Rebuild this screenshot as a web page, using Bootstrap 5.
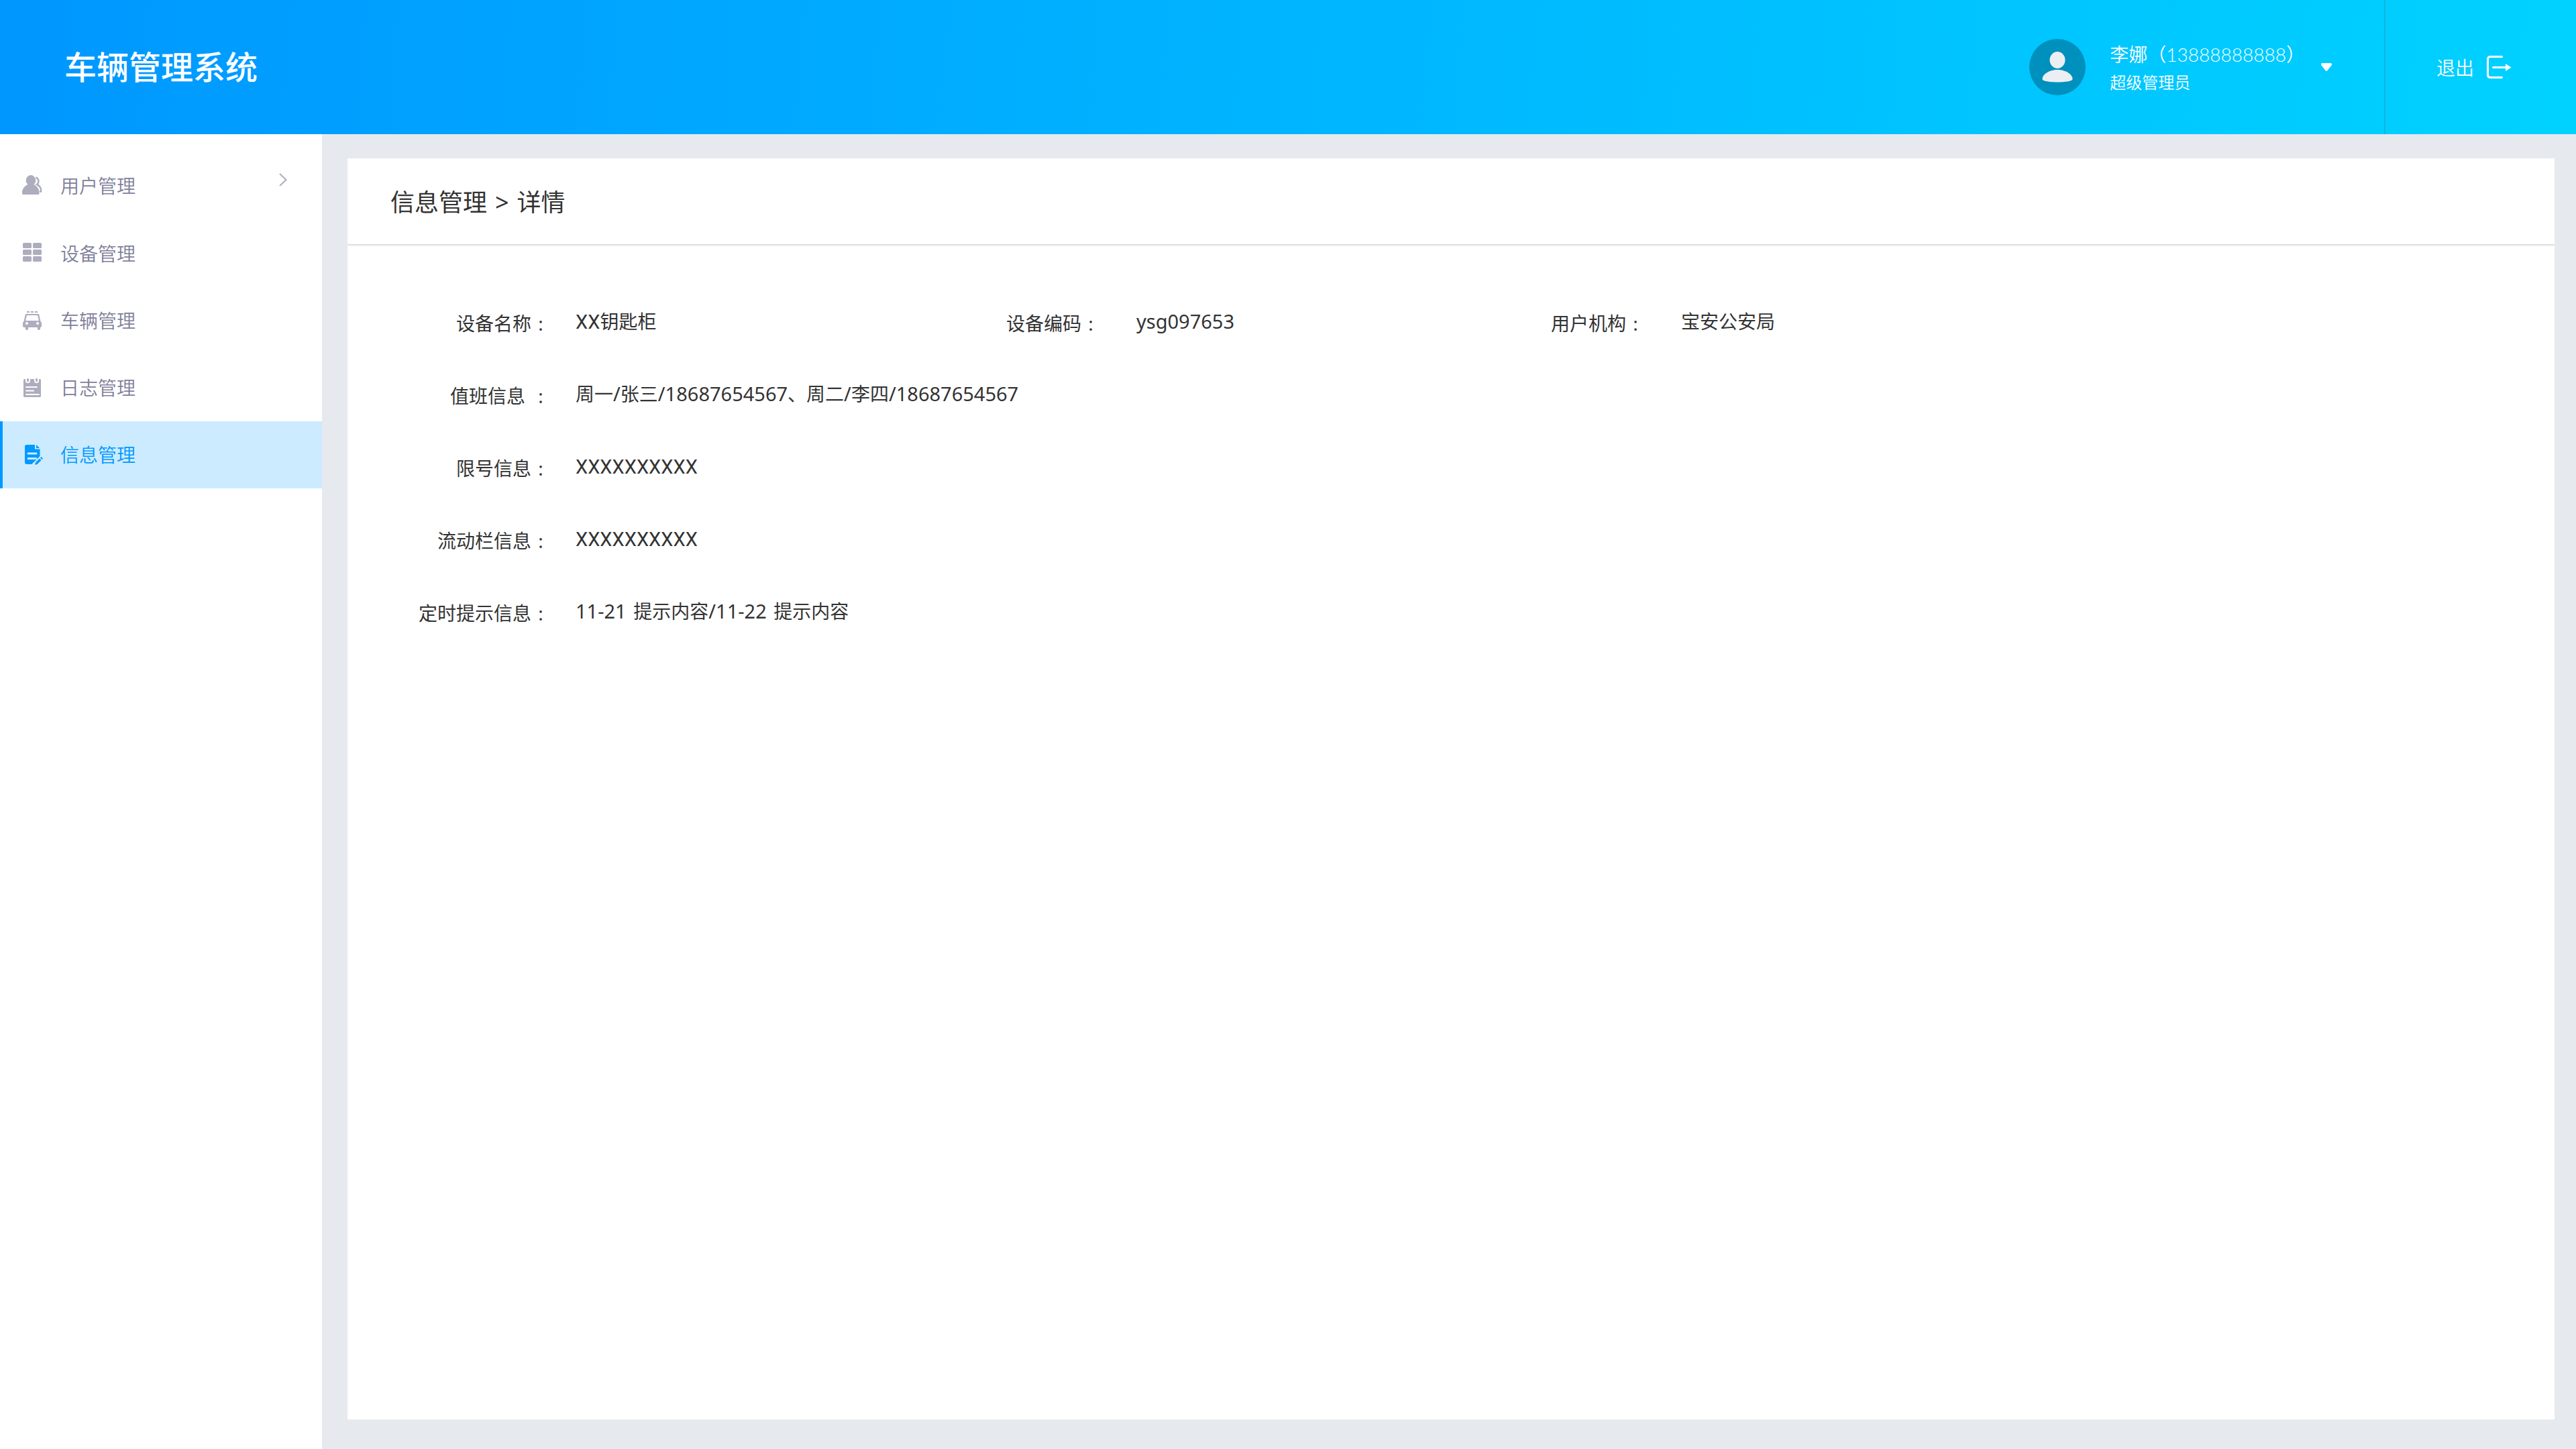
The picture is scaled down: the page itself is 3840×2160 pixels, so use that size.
<!DOCTYPE html>
<html lang="zh-CN">
<head>
<meta charset="utf-8">
<meta name="viewport" content="width=device-width, initial-scale=1">
<title>车辆管理系统</title>
<link href="https://cdn.jsdelivr.net/npm/bootstrap@5.3.0/dist/css/bootstrap.min.css" rel="stylesheet">
<style>
  body { font-family: "Noto Sans", "Noto Sans CJK SC", sans-serif; font-size: 28px; line-height: 40px; background: #e6e9ee; color: #333; }
  a { color: inherit; text-decoration: none; }
  .topbar { height: 200px; background: linear-gradient(95deg, #0097ff, #00d2ff); color: #fff; }
  .brand-title { padding: 0 0 6px 96px; font: 500 48px/72px "Noto Sans CJK SC", sans-serif; margin: 0; }
  .user-btn { color: #fff; padding: 0 78px 0 0; gap: 36px; font-family: Lato, "Noto Sans CJK SC", sans-serif; font-size: 28px; font-weight: 350; }
  .user-btn .who { padding-top: 2px; margin-right: -12px; }
  .user-btn .role { font-size: 24px; line-height: 40px; }
  .user-btn .name { line-height: 44px; }
  .exit-link { width: 286px; border-left: 2px solid #13b3e0; padding-left: 76px; gap: 18px; font-weight: 350; font-family: "Noto Sans CJK SC", sans-serif; }
  .side { width: 480px; background: #fff; padding-top: 28px; }
  .side .nav-link { height: 100px; padding: 0 52px 2px 28px; border-left: 4px solid transparent; gap: 26px; color: #80809a; font-family: "Noto Sans CJK SC", sans-serif; font-weight: 350; }
  .side .nav-link:first-child { padding-bottom: 4px; }
  .side .nav-link svg { fill: #adadbe; }
  .side .nav-link.active { color: #0099ff; background: #ccebff; border-left-color: #0099ff; }
  .side .nav-link.active svg { fill: #0099ff; }
  .content-area { padding: 36px 32px 44px 38px; }
  .crumbs { height: 130px; padding: 4px 0 0 64px; font-size: 36px; line-height: 52px; border-bottom: 2px solid #ddd; margin: 0; --bs-breadcrumb-divider: ">"; --bs-breadcrumb-divider-color: #333; --bs-breadcrumb-item-padding-x: 12px; --bs-breadcrumb-item-active-color: #333; }
  .fields { display: grid; grid-template-columns: 302px 170fr 140px 168fr 140px 339fr; row-gap: 65px; padding-top: 93px; margin: 0; }
  .fields dt { font-weight: 400; text-align: right; padding-top: 3px; white-space: nowrap; }
  .fields dt::after { content: ":"; display: inline-block; width: 28px; text-align: center; }
  .fields dt.spaced::after { margin-left: 9px; }
  .fields dd { margin: 0; padding-left: 38px; }
  .fields dd.far { padding-left: 54px; }
  .fields dd.wide { grid-column: span 5; }
  .num { font-size: 29px; }
  .day { padding-right: 3px; }
  .xs { font-family: Roboto, sans-serif; font-size: 29px; }
</style>
<script src="https://cdn.jsdelivr.net/npm/bootstrap@5.3.0/dist/js/bootstrap.bundle.min.js"></script>
</head>
<body class="d-flex flex-column min-vh-100">
<header class="topbar d-flex align-items-center">
  <h1 class="brand-title me-auto">车辆管理系统</h1>
  <button type="button" class="user-btn btn border-0 rounded-0 d-flex align-items-center text-start">
    <svg width="84" height="84" viewBox="0 0 84 84" aria-hidden="true"><circle cx="42" cy="42" r="42" fill="#0090bd"/><ellipse cx="42" cy="31.500" rx="11.500" ry="12.500" fill="#ebeff3"/><path d="M19.500 60C19.500 52 31 46 42 46s22.500 6 22.500 14c0 6-45 6-45 0z" fill="#ebeff3"/></svg>
    <span class="who d-flex flex-column"><span class="name">李娜（13888888888）</span><span class="role">超级管理员</span></span>
    <svg width="16" height="12" viewBox="0 0 16 12" aria-hidden="true"><path d="M1.500 0h13q2.500 1 1 3.500L9.500 11q-1.500 2-3 0L.500 3.500Q-1 1 1.500 0z" fill="#fff"/></svg>
  </button>
  <a href="#" class="exit-link h-100 d-flex align-items-center">退出
    <svg width="38" height="36" viewBox="0 0 38 36" fill="none" stroke="#fff" stroke-width="3" aria-hidden="true"><path d="M23.500 2.500H6.500Q2.500 2.500 2.500 6.500v23q0 4 4 4h17M10.500 18.500h20" stroke-linecap="round"/><path d="M29 13l8.500 5.500-8.500 5.500z" fill="#fff" stroke="none"/></svg>
  </a>
</header>
<div class="d-flex flex-grow-1">
  <nav class="side nav flex-column flex-nowrap flex-shrink-0">
    <a class="nav-link d-flex align-items-center" href="#">
      <svg width="32" height="32" viewBox="0 0 32 32" aria-hidden="true"><path d="M14 1a8 8 0 0 1 4.500 14C23 17 26.500 21.500 26.500 27v1.500Q26.500 30 25 30H2.500Q1 30 1 28.500V27C1 21.500 5 17 9.500 15A8 8 0 0 1 14 1z"/><path d="M21.500 4.500c5 2 5 8 1.500 10.500 4 1.500 7 6 6 10.500h-2" fill="none" stroke="#adadbe" stroke-width="2.500"/></svg>
      用户管理
      <svg class="ms-auto mb-3" width="12" height="20" viewBox="0 0 12 20" aria-hidden="true"><path d="M1 1l9.500 9L1 19" fill="none" stroke="#adadbe" stroke-width="2"/></svg>
    </a>
    <a class="nav-link d-flex align-items-center" href="#">
      <svg width="32" height="32" viewBox="0 0 32 32" aria-hidden="true"><rect x="2" y="1" width="13" height="8" rx="1.500"/><rect x="17" y="1" width="13" height="8" rx="1.500"/><rect x="2" y="11" width="13" height="8" rx="1.500"/><rect x="17" y="11" width="13" height="8" rx="1.500"/><rect x="2" y="21" width="13" height="8" rx="1.500"/><rect x="17" y="21" width="13" height="8" rx="1.500"/></svg>
      设备管理
    </a>
    <a class="nav-link d-flex align-items-center" href="#">
      <svg width="32" height="32" viewBox="0 0 32 32" aria-hidden="true"><path d="M8 3h4v2H8zM14 3h4v2h-4zM20 3h4v2h-4z"/><path fill-rule="evenodd" d="M6 7h20l2.500 11L30 20v5q0 2-2 2v3q-2 2-4 0v-3H10v3q-2 2-4 0v-3q-4 0-4-2v-5l1.500-2zM8 9L6 17h20L24 9zM8 19a2 2 0 1 0 0 4 2 2 0 0 0 0-4zM24 19a2 2 0 1 0 0 4 2 2 0 0 0 0-4z"/></svg>
      车辆管理
    </a>
    <a class="nav-link d-flex align-items-center" href="#">
      <svg width="32" height="32" viewBox="0 0 32 32" aria-hidden="true"><rect x="3" y="4" width="26" height="27" rx="1.500"/><g fill="none" stroke="#fff" stroke-width="2" stroke-linecap="round"><path d="M7 16h16M7 21.500h11M7 27h19"/><path d="M7 3v4q0 2 2.500 2T12 7V3M20 3v4q0 2 2.500 2T25 7V3"/></g><path d="M8.500 3h2v5h-2zM21.500 3h2v5h-2z"/></svg>
      日志管理
    </a>
    <a class="nav-link active d-flex align-items-center" aria-current="page" href="#">
      <svg width="32" height="32" viewBox="0 0 32 32" aria-hidden="true"><path d="M8 2h12v6.500h7.500V19L17 31H8q-3 0-3-3V5q0-3 3-3z"/><path d="M22 2l5 5h-5z"/><path d="M10 15h12M10 22.500h12" fill="none" stroke="#ccebff" stroke-width="3" stroke-linecap="round"/><path d="M31 21L18 33" stroke="#ccebff" stroke-width="7"/><path d="M29.500 20l2.500 2.500-1.500 1.500-2.500-2.500zM27 22.500l2.500 2.500-6 6-3.500 1 1-3.500z"/></svg>
      信息管理
    </a>
  </nav>
  <main class="content-area flex-grow-1 d-flex">
    <section class="bg-white flex-grow-1">
      <ol class="crumbs breadcrumb align-items-center">
        <li class="breadcrumb-item"><a href="#">信息管理</a></li>
        <li class="breadcrumb-item active" aria-current="page">详情</li>
      </ol>
      <dl class="fields">
        <dt>设备名称</dt><dd><span class="xs">XX</span>钥匙柜</dd>
        <dt>设备编码</dt><dd class="far"><span class="num">ysg097653</span></dd>
        <dt>用户机构</dt><dd class="far">宝安公安局</dd>
        <dt class="spaced">值班信息</dt><dd class="wide">周一<span class="num">/</span>张三<span class="num">/18687654567</span>、周二<span class="num">/</span>李四<span class="num">/18687654567</span></dd>
        <dt>限号信息</dt><dd class="wide"><span class="xs">XXXXXXXXXX</span></dd>
        <dt>流动栏信息</dt><dd class="wide"><span class="xs">XXXXXXXXXX</span></dd>
        <dt>定时提示信息</dt><dd class="wide"><span class="num day">11-21 </span>提示内容<span class="num day">/11-22 </span>提示内容</dd>
      </dl>
    </section>
  </main>
</div>
</body>
</html>
